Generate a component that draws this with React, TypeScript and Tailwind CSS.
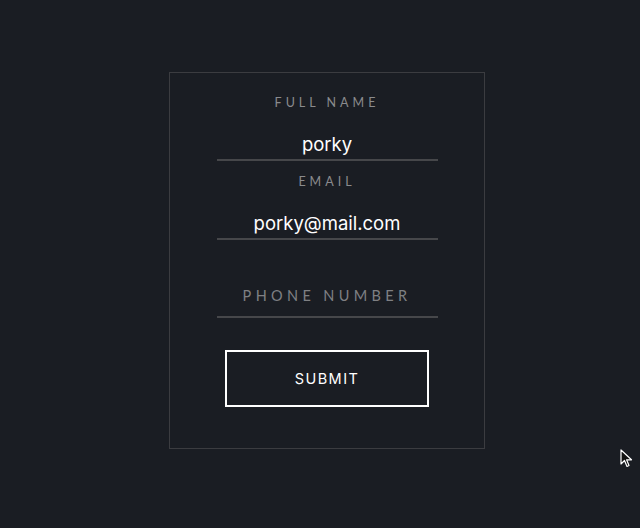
import React from 'react'

const labelCls =
  "h-[20px] text-center text-[12.5px] leading-[20px] tracking-[0.32em] text-[#8a8b8d] font-['Lato',sans-serif] uppercase"

const valueCls =
  "w-full h-[48px] pt-[16px] bg-transparent text-center text-white text-[18.5px] font-['Inter','Liberation_Sans',sans-serif] border-b-2 border-[#46474a] outline-none"

const App = () => {
  return (
    <div className="relative min-h-[528px] w-full bg-[#1a1d23] pt-[72px]">
      <form className="ml-[169px] w-[316px] border border-[#3b3c40] pt-[20px] pb-[41px] flex flex-col items-center">
        <div className="w-[221px] flex flex-col">
          <label className={labelCls}>Full Name</label>
          <input className={valueCls} defaultValue="porky" readOnly />
        </div>
        <div className="w-[221px] flex flex-col mt-[11px]">
          <label className={labelCls}>Email</label>
          <input className={valueCls} defaultValue="porky@mail.com" readOnly />
        </div>
        <div className="w-[221px] flex flex-col mt-[10px]">
          <div className="h-[20px]"></div>
          <input
            className="w-full h-[48px] pt-[4px] bg-transparent text-center text-[14.5px] tracking-[0.3em] uppercase font-['Lato',sans-serif] placeholder:text-[#7f8083] border-b-2 border-[#46474a] outline-none"
            placeholder="PHONE NUMBER"
          />
        </div>
        <button
          type="button"
          className="mt-[32px] w-[204px] h-[57px] border-2 border-white text-white text-[14.5px] tracking-[0.1em] font-['Inter','Liberation_Sans',sans-serif]"
        >
          SUBMIT
        </button>
      </form>
      <svg className="absolute left-[620px] top-[449px]" width="13" height="19" viewBox="0 0 13 19">
        <path d="M1 1 L1 15 L4.5 11.5 L7 17.5 L9 16.5 L6.6 10.8 L11.5 10.8 Z" fill="#111" stroke="#fff" strokeWidth="1.2" strokeLinejoin="round" />
      </svg>
    </div>
  )
}

export default App
